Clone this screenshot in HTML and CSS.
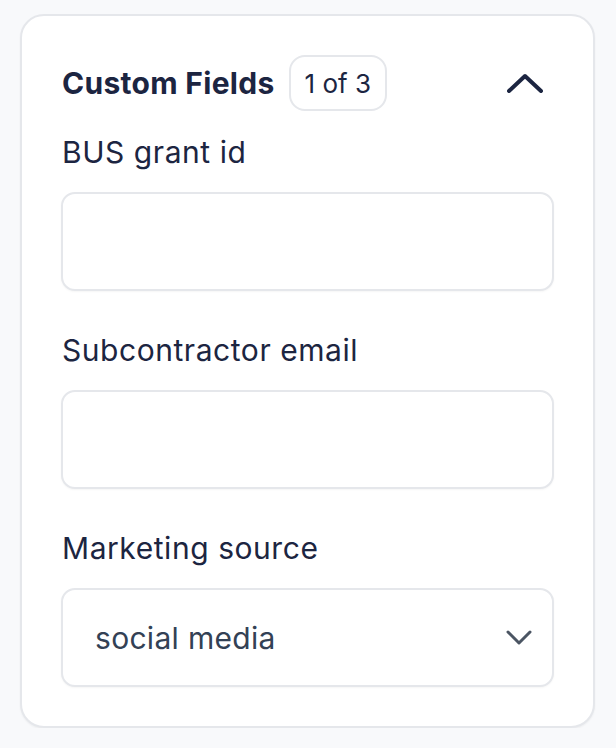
FILE: index.html
```html
<!DOCTYPE html>
<html lang="en">
<head>
    <meta charset="UTF-8">
    <meta name="viewport" content="width=device-width, initial-scale=1.0">
    <title>Custom Fields</title>
    <link rel="stylesheet" href="styles.css">
</head>
<body>
    <section class="card">
        <header class="card-header">
            <h2>Custom Fields</h2>
            <span class="badge">1 of 3</span>
            <button class="toggle" aria-label="Collapse custom fields">
                <svg width="36" height="20" viewBox="0 0 36 20" fill="none" stroke="currentColor" stroke-width="4" stroke-linecap="round" stroke-linejoin="round">
                    <path d="M2 18 L18 3 L34 18"/>
                </svg>
            </button>
        </header>

        <div class="form-group">
            <label for="busGrantId">BUS grant id</label>
            <input type="text" id="busGrantId" name="busGrantId">
        </div>

        <div class="form-group">
            <label for="subEmail">Subcontractor email</label>
            <input type="email" id="subEmail" name="subEmail">
        </div>

        <div class="form-group">
            <label for="marketingSource">Marketing source</label>
            <div class="select-wrap">
                <select id="marketingSource" name="marketingSource">
                    <option value="social">social media</option>
                    <option value="referral">referral</option>
                    <option value="search">search</option>
                </select>
                <svg class="select-arrow" width="26" height="16" viewBox="0 0 26 16" fill="none" stroke="currentColor" stroke-width="3" stroke-linecap="round" stroke-linejoin="round">
                    <path d="M2 2 L13 13 L24 2"/>
                </svg>
            </div>
        </div>
    </section>
</body>
</html>
```

FILE: styles.css
```css
:root {
    --text-color: #1c2541;
    --muted-text: #334155;
    --icon-gray: #4b5563;
    --page-bg: #f8f9fb;
    --border-color: #e5e7eb;
}

* {
    box-sizing: border-box;
}

body {
    font-family: Inter, "Noto Sans", sans-serif;
    color: var(--text-color);
    background-color: var(--page-bg);
    margin: 0;
    padding: 14px 21px 0 20px;
}

.card {
    background-color: white;
    border: 2px solid var(--border-color);
    border-radius: 24px;
    box-shadow: 0 1px 2px rgba(0, 0, 0, 0.05);
    padding: 39px;
    display: flex;
    flex-direction: column;
    gap: 39px;
}

.card-header {
    display: flex;
    align-items: center;
    gap: 14px;
    height: 56px;
    margin-bottom: -18px;
    padding-left: 1px;
}

h2 {
    margin: 0;
    font-size: 30px;
    font-weight: 700;
    letter-spacing: 0.3px;
}

.badge {
    display: inline-flex;
    align-items: center;
    justify-content: center;
    height: 56px;
    padding: 0 14px;
    border: 2px solid var(--border-color);
    border-radius: 16px;
    font-size: 26px;
    color: var(--text-color);
}

.toggle {
    margin-left: auto;
    margin-right: 11px;
    padding: 0;
    border: none;
    background: none;
    color: var(--text-color);
    display: flex;
    cursor: pointer;
}

.form-group {
    display: flex;
    flex-direction: column;
    gap: 20px;
}

label {
    display: block;
    padding-left: 1px;
    font-size: 30px;
    line-height: 40px;
    font-weight: 400;
    letter-spacing: 0.55px;
}

input, select {
    width: 100%;
    height: 99px;
    padding: 0 32px;
    border: 2px solid var(--border-color);
    border-radius: 14px;
    background: white;
    font-family: inherit;
    font-size: 30px;
    letter-spacing: 0.3px;
    color: var(--muted-text);
    box-shadow: 0 1px 2px rgba(0, 0, 0, 0.04);
}

input:focus, select:focus {
    outline: none;
    border-color: #2563eb;
}

.select-wrap {
    position: relative;
}

select {
    appearance: none;
    -webkit-appearance: none;
}

.select-arrow {
    position: absolute;
    right: 22px;
    top: 50%;
    transform: translateY(-50%);
    color: var(--icon-gray);
    pointer-events: none;
}
```
